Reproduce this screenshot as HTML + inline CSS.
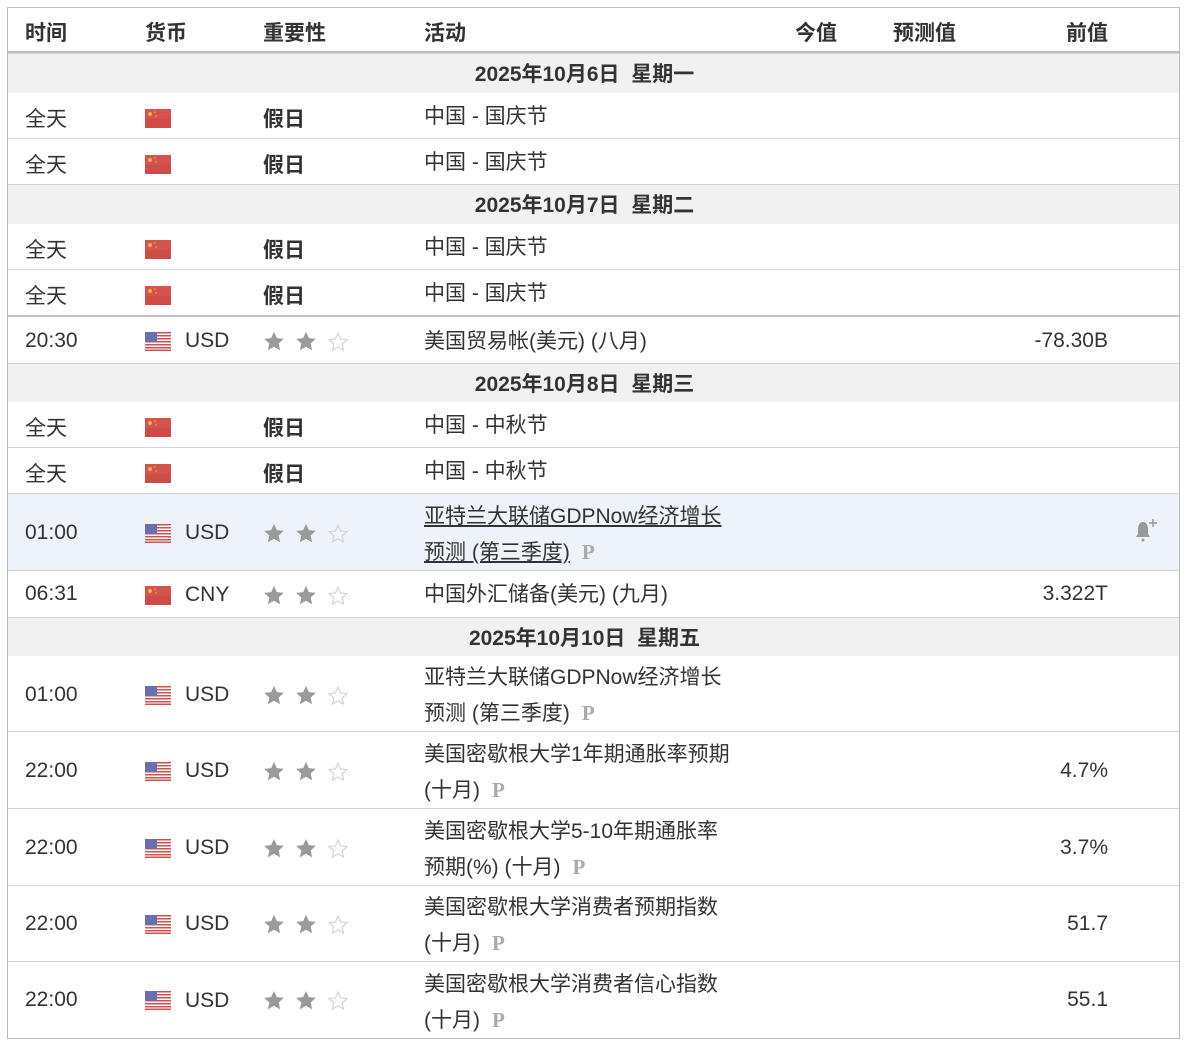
<!DOCTYPE html>
<html><head><meta charset="utf-8"><style>
*{margin:0;padding:0;box-sizing:border-box}
body{width:1186px;height:1048px;background:#fff;font-family:"Liberation Sans","Noto Sans CJK SC",sans-serif;color:#333;font-size:21px;position:relative;overflow:hidden}
.tbl{position:absolute;left:7px;top:7px;width:1173px;height:1032px;border:1px solid #bbb}
.r{position:absolute;left:8px;width:1171px;border-top:1px solid #d4d4d4}
.d{background:#f1f1f1;text-align:center;font-weight:bold;font-size:21px;padding-right:18px;padding-top:1px}
.c{position:absolute;white-space:nowrap;line-height:24px;height:24px;margin-top:3px}
.l{margin-top:1px}
svg.c{height:19px;margin-top:1px}
.h{font-weight:bold}
.st{position:absolute;width:22px;height:21px}
.p{color:#aaa;font-family:"Liberation Serif",serif;font-weight:bold;font-size:21px;margin-left:12px}
</style></head><body>
<div class="tbl"></div>
<div class="c h" style="left:25px;top:19px">时间</div>
<div class="c h" style="left:145px;top:19px">货币</div>
<div class="c h" style="left:263px;top:19px">重要性</div>
<div class="c h" style="left:424px;top:19px">活动</div>
<div class="c h" style="left:795px;top:19px">今值</div>
<div class="c h" style="left:893px;top:19px">预测值</div>
<div class="c h" style="left:1066px;top:19px">前值</div>
<div style="position:absolute;left:8px;top:51px;width:1171px;height:3px;background:#bdbdbd"></div>

<svg width="0" height="0" style="position:absolute"><defs>
<symbol id="cn" viewBox="0 0 26 19"><rect width="26" height="19" fill="#d4534f"/><rect y="10" width="26" height="9" fill="#c8443f" opacity=".5"/><circle cx="5" cy="5" r="2" fill="#e6b64a"/><circle cx="10" cy="3" r=".8" fill="#e6b64a"/><circle cx="11" cy="7" r=".8" fill="#e6b64a"/></symbol>
<symbol id="us" viewBox="0 0 26 19"><rect width="26" height="19" fill="#fff"/><g fill="#d0504e"><rect y="0" width="26" height="1.5"/><rect y="3" width="26" height="1.5"/><rect y="6" width="26" height="1.5"/><rect y="9" width="26" height="1.5"/><rect y="12" width="26" height="1.5"/><rect y="15" width="26" height="1.5"/><rect y="17.5" width="26" height="1.5"/></g><rect width="12" height="10" fill="#6a6fb0"/></symbol>
<symbol id="sf" viewBox="0 0 24 24"><path d="M12 1l3.3 7.2 7.9.8-5.9 5.3 1.7 7.7L12 18l-7 4 1.7-7.7L.8 9l7.9-.8z" fill="#9a9a9a"/></symbol>
<symbol id="so" viewBox="0 0 24 24"><path d="M12 2.5l3 6.6 7.2.8-5.4 4.8 1.5 7.1L12 18.1l-6.3 3.7 1.5-7.1L1.8 9.9 9 9.1z" fill="none" stroke="#d4d4d4" stroke-width="1.4"/></symbol>
</defs></svg>

<div class="r d" style="top:53px;height:40px;line-height:40px">2025年10月6日&nbsp;&nbsp;星期一</div>
<div class="r d" style="top:184px;height:40px;line-height:40px">2025年10月7日&nbsp;&nbsp;星期二</div>
<div class="r d" style="top:363px;height:39px;line-height:39px">2025年10月8日&nbsp;&nbsp;星期三</div>
<div class="r d" style="top:617px;height:39px;line-height:39px">2025年10月10日&nbsp;&nbsp;星期五</div>

<div class="r" style="top:138px"></div>
<div class="r" style="top:269px"></div>
<div style="position:absolute;left:8px;top:315px;width:1171px;height:2px;background:#c4c4c4"></div>
<div class="r" style="top:447px"></div>
<div class="r" style="top:493px;height:78px;background:#eef2f9"></div>
<div class="r" style="top:570px"></div>
<div class="r" style="top:731px"></div>
<div class="r" style="top:808px"></div>
<div class="r" style="top:885px"></div>
<div class="r" style="top:961px"></div>

<div class="c" style="left:25px;top:105px">全天</div><svg class="c" style="left:145px;top:108px" width="26" height="19"><use href="#cn"/></svg><div class="c h" style="left:263px;top:105px">假日</div><div class="c" style="left:424px;top:102px">中国 - 国庆节</div>
<div class="c" style="left:25px;top:151px">全天</div><svg class="c" style="left:145px;top:154px" width="26" height="19"><use href="#cn"/></svg><div class="c h" style="left:263px;top:151px">假日</div><div class="c" style="left:424px;top:148px">中国 - 国庆节</div>
<div class="c" style="left:25px;top:236px">全天</div><svg class="c" style="left:145px;top:239px" width="26" height="19"><use href="#cn"/></svg><div class="c h" style="left:263px;top:236px">假日</div><div class="c" style="left:424px;top:233px">中国 - 国庆节</div>
<div class="c" style="left:25px;top:282px">全天</div><svg class="c" style="left:145px;top:285px" width="26" height="19"><use href="#cn"/></svg><div class="c h" style="left:263px;top:282px">假日</div><div class="c" style="left:424px;top:279px">中国 - 国庆节</div>
<div class="c" style="left:25px;top:414px">全天</div><svg class="c" style="left:145px;top:417px" width="26" height="19"><use href="#cn"/></svg><div class="c h" style="left:263px;top:414px">假日</div><div class="c" style="left:424px;top:411px">中国 - 中秋节</div>
<div class="c" style="left:25px;top:460px">全天</div><svg class="c" style="left:145px;top:463px" width="26" height="19"><use href="#cn"/></svg><div class="c h" style="left:263px;top:460px">假日</div><div class="c" style="left:424px;top:457px">中国 - 中秋节</div>

<div class="c l" style="left:25px;top:328px">20:30</div><svg class="c" style="left:145px;top:331px" width="26" height="19"><use href="#us"/></svg><div class="c l" style="left:185px;top:328px">USD</div>
<svg class="st" style="left:263px;top:331px"><use href="#sf"/></svg><svg class="st" style="left:295px;top:331px"><use href="#sf"/></svg><svg class="st" style="left:327px;top:331px"><use href="#so"/></svg>
<div class="c" style="left:424px;top:327px">美国贸易帐(美元) (八月)</div><div class="c l" style="right:78px;top:328px">-78.30B</div>

<div class="c l" style="left:25px;top:520px">01:00</div><svg class="c" style="left:145px;top:523px" width="26" height="19"><use href="#us"/></svg><div class="c l" style="left:185px;top:520px">USD</div>
<svg class="st" style="left:263px;top:523px"><use href="#sf"/></svg><svg class="st" style="left:295px;top:523px"><use href="#sf"/></svg><svg class="st" style="left:327px;top:523px"><use href="#so"/></svg>
<div class="c" style="left:424px;top:502px;text-decoration:underline">亚特兰大联储GDPNow经济增长</div><div class="c" style="left:424px;top:537px"><span style="text-decoration:underline">预测 (第三季度)</span><span class="p">P</span></div>
<svg class="c" style="left:1133px;top:516px;height:28px;width:30px" width="30" height="28" viewBox="0 0 30 28"><path d="M10 5c-3 0-5 3-5 7v5l-2 3h14l-2-3v-5c0-4-2-7-5-7z" fill="#999"/><circle cx="10" cy="23" r="1.5" fill="#999"/><path d="M16 6h8M20 2v8" stroke="#999" stroke-width="1.5"/></svg>

<div class="c l" style="left:25px;top:581px">06:31</div><svg class="c" style="left:145px;top:585px" width="26" height="19"><use href="#cn"/></svg><div class="c l" style="left:185px;top:582px">CNY</div>
<svg class="st" style="left:263px;top:585px"><use href="#sf"/></svg><svg class="st" style="left:295px;top:585px"><use href="#sf"/></svg><svg class="st" style="left:327px;top:585px"><use href="#so"/></svg>
<div class="c" style="left:424px;top:580px">中国外汇储备(美元) (九月)</div><div class="c l" style="right:78px;top:581px">3.322T</div>

<div class="c l" style="left:25px;top:682px">01:00</div><svg class="c" style="left:145px;top:685px" width="26" height="19"><use href="#us"/></svg><div class="c l" style="left:185px;top:682px">USD</div>
<svg class="st" style="left:263px;top:685px"><use href="#sf"/></svg><svg class="st" style="left:295px;top:685px"><use href="#sf"/></svg><svg class="st" style="left:327px;top:685px"><use href="#so"/></svg>
<div class="c" style="left:424px;top:663px">亚特兰大联储GDPNow经济增长</div><div class="c" style="left:424px;top:698px">预测 (第三季度)<span class="p">P</span></div>

<div class="c l" style="left:25px;top:758px">22:00</div><svg class="c" style="left:145px;top:761px" width="26" height="19"><use href="#us"/></svg><div class="c l" style="left:185px;top:758px">USD</div>
<svg class="st" style="left:263px;top:761px"><use href="#sf"/></svg><svg class="st" style="left:295px;top:761px"><use href="#sf"/></svg><svg class="st" style="left:327px;top:761px"><use href="#so"/></svg>
<div class="c" style="left:424px;top:740px">美国密歇根大学1年期通胀率预期</div><div class="c" style="left:424px;top:775px">(十月)<span class="p">P</span></div><div class="c l" style="right:78px;top:758px">4.7%</div>

<div class="c l" style="left:25px;top:835px">22:00</div><svg class="c" style="left:145px;top:838px" width="26" height="19"><use href="#us"/></svg><div class="c l" style="left:185px;top:835px">USD</div>
<svg class="st" style="left:263px;top:838px"><use href="#sf"/></svg><svg class="st" style="left:295px;top:838px"><use href="#sf"/></svg><svg class="st" style="left:327px;top:838px"><use href="#so"/></svg>
<div class="c" style="left:424px;top:817px">美国密歇根大学5-10年期通胀率</div><div class="c" style="left:424px;top:852px">预期(%) (十月)<span class="p">P</span></div><div class="c l" style="right:78px;top:835px">3.7%</div>

<div class="c l" style="left:25px;top:911px">22:00</div><svg class="c" style="left:145px;top:914px" width="26" height="19"><use href="#us"/></svg><div class="c l" style="left:185px;top:911px">USD</div>
<svg class="st" style="left:263px;top:914px"><use href="#sf"/></svg><svg class="st" style="left:295px;top:914px"><use href="#sf"/></svg><svg class="st" style="left:327px;top:914px"><use href="#so"/></svg>
<div class="c" style="left:424px;top:893px">美国密歇根大学消费者预期指数</div><div class="c" style="left:424px;top:928px">(十月)<span class="p">P</span></div><div class="c l" style="right:78px;top:911px">51.7</div>

<div class="c l" style="left:25px;top:987px">22:00</div><svg class="c" style="left:145px;top:990px" width="26" height="19"><use href="#us"/></svg><div class="c l" style="left:185px;top:988px">USD</div>
<svg class="st" style="left:263px;top:990px"><use href="#sf"/></svg><svg class="st" style="left:295px;top:990px"><use href="#sf"/></svg><svg class="st" style="left:327px;top:990px"><use href="#so"/></svg>
<div class="c" style="left:424px;top:970px">美国密歇根大学消费者信心指数</div><div class="c" style="left:424px;top:1005px">(十月)<span class="p">P</span></div><div class="c l" style="right:78px;top:987px">55.1</div>
</body></html>
